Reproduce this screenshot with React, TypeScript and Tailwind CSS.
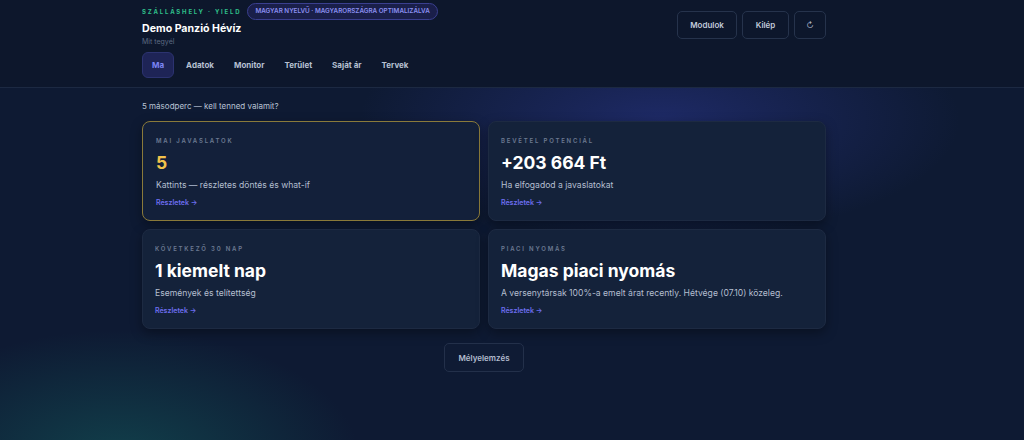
import React from 'react';

type Card = {
  label: string;
  value: string;
  sub: string;
  accent?: boolean;
};

const cards: Card[] = [
  { label: 'Mai javaslatok', value: '5', sub: 'Kattints — részletes döntés és what-if', accent: true },
  { label: 'Bevétel potenciál', value: '+203 664 Ft', sub: 'Ha elfogadod a javaslatokat' },
  { label: 'Következő 30 nap', value: '1 kiemelt nap', sub: 'Események és telítettség' },
  { label: 'Piaci nyomás', value: 'Magas piaci nyomás', sub: 'A versenytársak 100%-a emelt árat recently. Hétvége (07.10) közeleg.' },
];

const tabs = ['Ma', 'Adatok', 'Monitor', 'Terület', 'Saját ár', 'Tervek'];

export default function App() {
  return (
    <div
      className="relative min-h-[440px] w-full overflow-hidden bg-[#0e1a33] text-white"
      style={{ fontFamily: 'Inter, "Noto Sans", sans-serif' }}
    >
      {/* background glows */}
      <div className="pointer-events-none absolute left-[360px] top-[0px] h-[240px] w-[600px] rounded-full bg-[radial-gradient(closest-side,rgba(40,52,135,0.6),transparent)]" />
      <div className="pointer-events-none absolute -left-[120px] top-[330px] h-[260px] w-[480px] rounded-full bg-[radial-gradient(closest-side,rgba(20,95,95,0.55),transparent)]" />

      {/* Header */}
      <header className="relative border-b border-[#1c2942] bg-[#0d172c]">
        <div className="ml-[142px] flex w-[684px] justify-between pb-[9px] pt-[3px]">
          <div>
            <div className="flex items-center gap-[6px]">
              <span className="text-[6px] font-bold uppercase tracking-[0.3em] text-[#2fbf8a]">
                Szálláshely · Yield
              </span>
              <span className="rounded-full border border-[#3a3f8f] bg-[#1a1f4a] px-[7px] py-[3px] text-[6.3px] font-semibold uppercase text-[#8b8ff0]">
                Magyar nyelvű · Magyarországra optimalizálva
              </span>
            </div>
            <h1 className="mt-[1px] text-[10.6px] font-bold leading-[16px] text-white">Demo Panzió Hévíz</h1>
            <p className="text-[7px] leading-[10px] text-[#5c6a82]">Mit tegyél</p>
            <nav className="mt-[5px] flex items-center">
              {tabs.map((t) => (
                <span
                  key={t}
                  className={
                    t === 'Ma'
                      ? 'mr-[2px] rounded-[6px] border border-[#2c3370] bg-[#1e2456] px-[9px] py-[7px] text-[8px] font-bold leading-[10px] text-[#7c84f5]'
                      : 'px-[10px] py-[7px] text-[8px] font-bold leading-[10px] text-[#b6c0d2]'
                  }
                >
                  {t}
                </span>
              ))}
            </nav>
          </div>
          <div className="flex items-start gap-[5px] pt-[8px]">
            <button className="h-[28px] w-[60px] rounded-[5px] border border-[#26334c] text-[8px] font-semibold text-[#c3ccdb]">
              Modulok
            </button>
            <button className="h-[28px] w-[47px] rounded-[5px] border border-[#26334c] text-[8px] font-semibold text-[#c3ccdb]">
              Kilép
            </button>
            <button className="h-[28px] w-[32px] rounded-[5px] border border-[#26334c] text-[8px] text-[#aab4c6]">
              ↻
            </button>
          </div>
        </div>
      </header>

      {/* Body */}
      <main className="relative ml-[142px] w-[684px] pt-[12px]">
        <p className="text-[8px] leading-[12px] text-[#b9c3d4]">5 másodperc — kell tenned valamit?</p>
        <div className="mt-[9px] grid grid-cols-2 gap-[8px]">
          {cards.map((c) => (
            <div
              key={c.label}
              className={
                c.accent
                  ? 'h-[100px] rounded-[8px] border border-[#8a7a3a] bg-[#13203a] px-[13px] pt-[14px] shadow-[0_4px_12px_rgba(0,0,0,0.35)]'
                  : 'h-[100px] rounded-[8px] border border-[#1d2a42] bg-[#14223a] px-[12px] pt-[14px] shadow-[0_4px_12px_rgba(0,0,0,0.35)]'
              }
            >
              <div className="text-[6px] font-semibold uppercase leading-[10px] tracking-[0.3em] text-[#6c7a92]">
                {c.label}
              </div>
              <div
                className={
                  c.accent
                    ? 'mt-[5px] text-[17.5px] font-bold leading-[24px] text-[#f2c24b]'
                    : 'mt-[5px] text-[17.5px] font-bold leading-[24px] text-white'
                }
              >
                {c.value}
              </div>
              <div className="mt-[4px] text-[8.6px] leading-[12px] text-[#b4bfd0]">{c.sub}</div>
              <div className="mt-[7px] text-[7px] font-semibold leading-[10px] text-[#6d6ef0]">Részletek →</div>
            </div>
          ))}
        </div>
        <div className="mt-[14px] flex justify-center">
          <button className="h-[29px] w-[80px] rounded-[5px] border border-[#23304a] bg-[#0f1b34] text-[8px] font-semibold text-[#b3bdcf]">
            Mélyelemzés
          </button>
        </div>
      </main>
    </div>
  );
}
